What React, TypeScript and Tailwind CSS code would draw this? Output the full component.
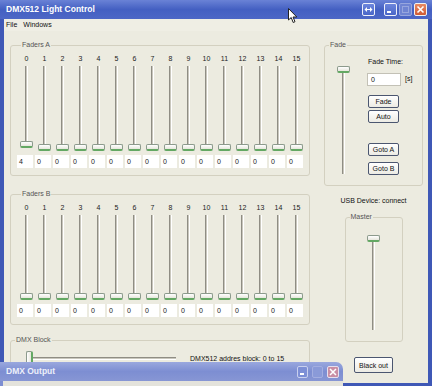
import React from "react";

const trackCls =
  "absolute w-[3px] bg-[#c9c7bd] border-l border-l-[#8f8d84] border-r border-r-white";
const thumbCls =
  "absolute h-[7px] w-[13px] rounded-[2px] border border-[#8c9a8c] border-b-[2px] border-b-[#63a863] bg-gradient-to-b from-white to-[#e6e6dc]";

function FaderGroup({ title, values }: { title: string; values: number[] }) {
  return (
    <fieldset className="border border-[#d3d0c0] rounded-[3px] w-[300px] pl-[6px] pt-[4px] pb-[7px]">
      <legend className="ml-[4px] px-[1px] text-[7px] leading-[10px] text-[#555]">{title}</legend>
      <div className="flex">
        {values.map((v, i) => (
          <div key={i} className="w-[18px] flex flex-col">
            <div className="h-[9px] w-[13px] ml-[3px] text-center text-[7px] leading-[9px] text-[#222]">{i}</div>
            <div className="relative h-[88px] w-[13px] ml-[3px]">
              <div className={`${trackCls} left-[5px] top-[3px] bottom-[4px]`} />
              <div className={`${thumbCls} left-0`} style={{ bottom: v * 0.75 }} />
            </div>
            <div className="mt-[4px] h-[13px] w-[16px] bg-white text-[7px] leading-[13px] pl-[2px] text-[#222]">{v}</div>
          </div>
        ))}
      </div>
    </fieldset>
  );
}

function XpButton({ label, w, h }: { label: string; w: string; h: string }) {
  return (
    <div
      className={`${w} ${h} flex items-center justify-center rounded-[2px] border border-[#4b5670] bg-gradient-to-b from-white to-[#ecebe4] text-[7px] leading-none text-[#111]`}
    >
      {label}
    </div>
  );
}

function TitleBtn({ kind }: { kind: "resize" | "min" | "max" | "close" }) {
  const base = "w-[13px] h-[13px] rounded-[2px] border flex items-center justify-center";
  if (kind === "close")
    return (
      <div className={`${base} border-[#f2f2f2] bg-gradient-to-b from-[#e88a64] to-[#d05a34]`}>
        <svg width="9" height="9" viewBox="0 0 9 9">
          <path d="M1.5 1.5 L7.5 7.5 M7.5 1.5 L1.5 7.5" stroke="white" strokeWidth="1.6" />
        </svg>
      </div>
    );
  if (kind === "max")
    return (
      <div className={`${base} border-[#97a6de] bg-[#6f84d2]`}>
        <div className="w-[7px] h-[7px] border border-[#97a6de]" />
      </div>
    );
  if (kind === "min")
    return (
      <div className={`${base} border-[#eef0fa] bg-gradient-to-b from-[#6d86dc] to-[#4a66c8] items-end justify-start`}>
        <div className="ml-[2px] mb-[2px] w-[4px] h-[2px] bg-white" />
      </div>
    );
  return (
    <div className={`${base} border-[#eef0fa] bg-gradient-to-b from-[#6d86dc] to-[#4a66c8]`}>
      <svg width="9" height="7" viewBox="0 0 9 7">
        <path d="M0.5 3.5 L3 1 L3 6 Z M8.5 3.5 L6 1 L6 6 Z" fill="white" />
        <rect x="2.5" y="3" width="4" height="1" fill="white" />
      </svg>
    </div>
  );
}

export default function App() {
  const a = [4, 0, 0, 0, 0, 0, 0, 0, 0, 0, 0, 0, 0, 0, 0, 0];
  const b = new Array(16).fill(0);
  return (
    <div className="relative w-[432px] h-[386px] overflow-hidden bg-[#3f58b6] font-['Liberation_Sans',Arial,sans-serif] flex flex-col">
      {/* Title bar */}
      <div className="h-[19px] shrink-0 flex items-center pl-[6px] pr-[5px] bg-gradient-to-b from-[#6a82d6] via-[#4460c2] to-[#4d67c6]">
        <div className="text-[8.5px] font-bold text-white leading-none">DMX512 Light Control</div>
        <div className="flex-1" />
        <TitleBtn kind="resize" />
        <div className="ml-[9px] flex gap-[2px]">
          <TitleBtn kind="min" />
          <TitleBtn kind="max" />
          <TitleBtn kind="close" />
        </div>
      </div>

      {/* Body */}
      <div className="flex-1 min-h-0 overflow-hidden mx-[4px] mb-[3px] bg-[#ecebe0] flex flex-col">
        <div className="h-[12px] shrink-0 flex items-center gap-[6px] pl-[2px] text-[7px] text-[#111] bg-[#efeee4]">
          <span>File</span>
          <span>Windows</span>
        </div>
        <div className="flex shrink-0">
          {/* Left column */}
          <div className="ml-[6px] flex flex-col">
            <div className="mt-[9px]">
              <FaderGroup title="Faders A" values={a} />
            </div>
            <div className="mt-[13px]">
              <FaderGroup title="Faders B" values={b} />
            </div>
            <fieldset className="mt-[10px] border border-[#d3d0c0] rounded-[3px] w-[300px] h-[60px] pt-[6px]">
              <legend className="ml-[4px] px-[1px] text-[7px] leading-[10px] text-[#555]">DMX Block</legend>
              <div className="flex items-start">
                <div className="relative ml-[15px] w-[150px] h-[13px]">
                  <div className="absolute left-[1px] right-0 top-[6px] h-[3px] bg-[#c9c7bd] border-t border-t-[#8f8d84] border-b border-b-white" />
                  <div className="absolute left-0 top-0 w-[7px] h-[13px] rounded-[2px] border border-[#8c9a8c] border-r-[2px] border-r-[#63a863] bg-gradient-to-r from-white to-[#e6e6dc]" />
                </div>
                <div className="ml-[14px] mt-[3px] text-[7px] leading-[10px] text-[#111]">DMX512 addres block: 0 to 15</div>
              </div>
            </fieldset>
          </div>

          {/* Right column */}
          <div className="ml-[14px] w-[99px] flex flex-col items-center">
            <fieldset className="mt-[9px] w-[99px] border border-[#d3d0c0] rounded-[3px] pt-[7px] pb-[10px]">
              <legend className="ml-[4px] px-[1px] text-[7px] leading-[10px] text-[#555]">Fade</legend>
              <div className="flex">
                <div className="relative ml-[12px] mt-[9px] w-[13px] h-[108px]">
                  <div className={`${trackCls} left-[5px] top-[7px] bottom-0`} />
                  <div className={`${thumbCls} left-0 top-0`} />
                </div>
                <div className="ml-[17px] flex flex-col">
                  <div className="h-[10px] text-[7px] leading-[10px] text-[#111] ml-[1px]">Fade Time:</div>
                  <div className="mt-[6px] flex items-center">
                    <div className="w-[34px] h-[13px] bg-white border border-[#c3c1b6] text-[7px] leading-[11px] pl-[3px] text-[#111]">0</div>
                    <span className="ml-[4px] text-[7px] text-[#111]">[s]</span>
                  </div>
                  <div className="ml-[1px] mt-[9px]"><XpButton label="Fade" w="w-[31px]" h="h-[13px]" /></div>
                  <div className="ml-[1px] mt-[2px]"><XpButton label="Auto" w="w-[31px]" h="h-[13px]" /></div>
                  <div className="ml-[1px] mt-[20px]"><XpButton label="Goto A" w="w-[31px]" h="h-[13px]" /></div>
                  <div className="ml-[1px] mt-[6px]"><XpButton label="Goto B" w="w-[31px]" h="h-[13px]" /></div>
                </div>
              </div>
            </fieldset>
            <div className="mt-[10px] h-[10px] text-[7px] leading-[10px] text-[#111]">USB Device: connect</div>
            <fieldset className="mt-[6px] w-[58px] border border-[#d3d0c0] rounded-[3px] pt-[13px] pb-[11px] flex justify-center">
              <legend className="ml-[4px] px-[1px] text-[7px] leading-[10px] text-[#555]">Master</legend>
              <div className="relative mx-auto w-[13px] h-[95px]">
                <div className={`${trackCls} left-[5px] top-[7px] bottom-0`} />
                <div className={`${thumbCls} left-0 top-0`} />
              </div>
            </fieldset>
            <div className="mt-[15px]">
              <XpButton label="Black out" w="w-[39px]" h="h-[16px]" />
            </div>
          </div>
        </div>
      </div>

      {/* DMX Output window overlapping */}
      <div className="absolute left-0 top-[362px] w-[343px] bottom-0 flex flex-col">
        <div className="h-[19px] shrink-0 rounded-tr-[7px] flex items-center pl-[6px] pr-[4px] bg-gradient-to-b from-[#9aa8de] via-[#7d8ed2] to-[#8796d4]">
          <div className="text-[8.5px] font-bold text-[#eef0fa] leading-none">DMX Output</div>
          <div className="flex-1" />
          <div className="flex gap-[4px]">
            <div className="w-[11px] h-[12px] rounded-[2px] border border-[#c9d0ee] bg-[#7d8fd6] flex items-end">
              <div className="ml-[2px] mb-[2px] w-[4px] h-[2px] bg-white" />
            </div>
            <div className="w-[11px] h-[12px] rounded-[2px] border border-[#a3aee0] bg-[#8a9ad8]" />
            <div className="w-[12px] h-[12px] rounded-[2px] border border-[#e6e0ee] bg-[#c98ea4] flex items-center justify-center">
              <svg width="8" height="8" viewBox="0 0 8 8">
                <path d="M1 1 L7 7 M7 1 L1 7" stroke="white" strokeWidth="1.5" />
              </svg>
            </div>
          </div>
        </div>
        <div className="flex-1 bg-[#e4e3dc] border-l-[3px] border-l-[#7d8ed2]" />
      </div>

      {/* Mouse cursor */}
      <svg className="absolute left-[288px] top-[8px]" width="10" height="16" viewBox="0 0 10 16">
        <path d="M0.5 0.5 L0.5 12 L3.2 9.5 L5.2 14.5 L7 13.7 L5 9 L8.8 9 Z" fill="white" stroke="#222" strokeWidth="1" />
      </svg>
    </div>
  );
}
